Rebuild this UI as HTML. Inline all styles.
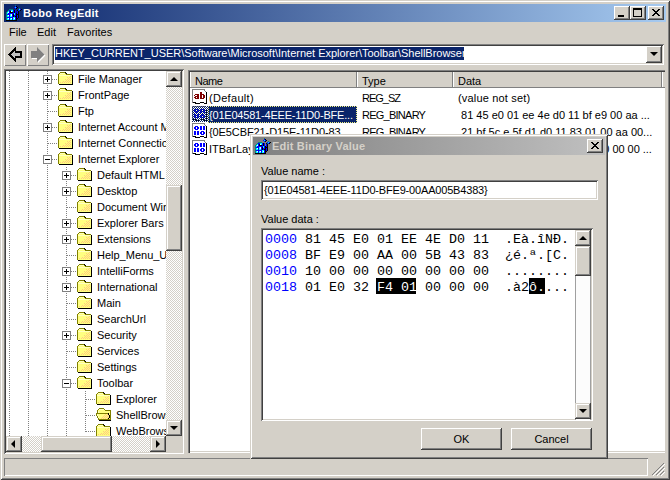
<!DOCTYPE html><html><head><meta charset="utf-8"><style>
*{margin:0;padding:0;box-sizing:border-box}
html,body{width:670px;height:480px;overflow:hidden;background:#d4d0c8;font-family:"Liberation Sans",sans-serif;font-size:11px;color:#000}
.a{position:absolute}
.sbtn{background:#d4d0c8;box-shadow:inset -1px -1px #404040,inset 1px 1px #d4d0c8,inset -2px -2px #808080,inset 2px 2px #fff}
.raised{background:#d4d0c8;box-shadow:inset -1px -1px #404040,inset 1px 1px #fff,inset -2px -2px #808080,inset 2px 2px #d4d0c8}
.sunken{box-shadow:inset 1px 1px #808080,inset -1px -1px #fff,inset 2px 2px #404040,inset -2px -2px #d4d0c8}
.t{position:absolute;white-space:pre;line-height:16px}
.dv{position:absolute;width:1px;background:repeating-linear-gradient(to bottom,#808080 0 1px,transparent 1px 2px)}
.dh{position:absolute;height:1px;background:repeating-linear-gradient(to right,#808080 0 1px,transparent 1px 2px)}
.pb{position:absolute;width:9px;height:9px;border:1px solid #808080;background:#fff}
.pb:before{content:"";position:absolute;left:1px;top:3px;width:5px;height:1px;background:#000}
.pb.p:after{content:"";position:absolute;left:3px;top:1px;width:1px;height:5px;background:#000}
.fold{position:absolute;width:16px;height:16px}
</style></head><body>
<svg width="0" height="0" style="position:absolute"><defs><symbol id="i0" viewBox="0 0 16 16" shape-rendering="crispEdges"><rect x="9" y="0" width="1" height="1" fill="#008080"/><rect x="9" y="1" width="1" height="1" fill="#0000ff"/><rect x="10" y="1" width="1" height="1" fill="#000000"/><rect x="8" y="2" width="1" height="1" fill="#0000ff"/><rect x="9" y="2" width="1" height="1" fill="#00ffff"/><rect x="10" y="2" width="1" height="1" fill="#0000ff"/><rect x="11" y="2" width="1" height="1" fill="#000000"/><rect x="9" y="3" width="1" height="1" fill="#0000ff"/><rect x="10" y="3" width="1" height="1" fill="#000000"/><rect x="13" y="3" width="1" height="1" fill="#008080"/><rect x="3" y="4" width="4" height="1" fill="#008080"/><rect x="12" y="4" width="1" height="1" fill="#0000ff"/><rect x="13" y="4" width="1" height="1" fill="#00ffff"/><rect x="14" y="4" width="1" height="1" fill="#0000ff"/><rect x="15" y="4" width="1" height="1" fill="#000000"/><rect x="2" y="5" width="1" height="1" fill="#008080"/><rect x="3" y="5" width="2" height="1" fill="#0000ff"/><rect x="5" y="5" width="2" height="1" fill="#00ffff"/><rect x="7" y="5" width="1" height="1" fill="#0000ff"/><rect x="8" y="5" width="1" height="1" fill="#000000"/><rect x="9" y="5" width="1" height="1" fill="#0000ff"/><rect x="11" y="5" width="1" height="1" fill="#000000"/><rect x="12" y="5" width="1" height="1" fill="#008080"/><rect x="13" y="5" width="1" height="1" fill="#0000ff"/><rect x="14" y="5" width="1" height="1" fill="#000000"/><rect x="1" y="6" width="1" height="1" fill="#008080"/><rect x="2" y="6" width="1" height="1" fill="#00ffff"/><rect x="3" y="6" width="1" height="1" fill="#0000ff"/><rect x="4" y="6" width="1" height="1" fill="#000000"/><rect x="5" y="6" width="1" height="1" fill="#ffffff"/><rect x="6" y="6" width="1" height="1" fill="#00ffff"/><rect x="7" y="6" width="1" height="1" fill="#0000ff"/><rect x="8" y="6" width="1" height="1" fill="#000000"/><rect x="9" y="6" width="1" height="1" fill="#0000ff"/><rect x="11" y="6" width="1" height="1" fill="#0000ff"/><rect x="12" y="6" width="1" height="1" fill="#000000"/><rect x="0" y="7" width="1" height="1" fill="#008080"/><rect x="1" y="7" width="1" height="1" fill="#00ffff"/><rect x="2" y="7" width="1" height="1" fill="#ffffff"/><rect x="3" y="7" width="1" height="1" fill="#0000ff"/><rect x="4" y="7" width="3" height="1" fill="#000000"/><rect x="7" y="7" width="1" height="1" fill="#0000ff"/><rect x="8" y="7" width="1" height="1" fill="#000000"/><rect x="9" y="7" width="1" height="1" fill="#0000ff"/><rect x="11" y="7" width="1" height="1" fill="#0000ff"/><rect x="12" y="7" width="1" height="1" fill="#000000"/><rect x="0" y="8" width="1" height="1" fill="#008080"/><rect x="1" y="8" width="1" height="1" fill="#00ffff"/><rect x="2" y="8" width="6" height="1" fill="#0000ff"/><rect x="8" y="8" width="1" height="1" fill="#00ffff"/><rect x="9" y="8" width="1" height="1" fill="#0000ff"/><rect x="10" y="8" width="1" height="1" fill="#000000"/><rect x="11" y="8" width="1" height="1" fill="#0000ff"/><rect x="12" y="8" width="1" height="1" fill="#000000"/><rect x="0" y="9" width="1" height="1" fill="#008080"/><rect x="1" y="9" width="3" height="1" fill="#0000ff"/><rect x="4" y="9" width="1" height="1" fill="#00ffff"/><rect x="5" y="9" width="1" height="1" fill="#ffffff"/><rect x="6" y="9" width="1" height="1" fill="#0000ff"/><rect x="7" y="9" width="1" height="1" fill="#000000"/><rect x="8" y="9" width="1" height="1" fill="#00ffff"/><rect x="9" y="9" width="1" height="1" fill="#0000ff"/><rect x="10" y="9" width="3" height="1" fill="#000000"/><rect x="0" y="10" width="1" height="1" fill="#008080"/><rect x="1" y="10" width="1" height="1" fill="#00ffff"/><rect x="2" y="10" width="1" height="1" fill="#ffffff"/><rect x="3" y="10" width="1" height="1" fill="#0000ff"/><rect x="4" y="10" width="1" height="1" fill="#00ffff"/><rect x="5" y="10" width="1" height="1" fill="#ffffff"/><rect x="6" y="10" width="1" height="1" fill="#0000ff"/><rect x="7" y="10" width="1" height="1" fill="#000000"/><rect x="8" y="10" width="2" height="1" fill="#0000ff"/><rect x="10" y="10" width="1" height="1" fill="#000000"/><rect x="11" y="10" width="1" height="1" fill="#0000ff"/><rect x="12" y="10" width="1" height="1" fill="#000000"/><rect x="0" y="11" width="1" height="1" fill="#008080"/><rect x="1" y="11" width="2" height="1" fill="#00ffff"/><rect x="3" y="11" width="1" height="1" fill="#0000ff"/><rect x="4" y="11" width="2" height="1" fill="#00ffff"/><rect x="6" y="11" width="1" height="1" fill="#0000ff"/><rect x="7" y="11" width="1" height="1" fill="#000000"/><rect x="8" y="11" width="1" height="1" fill="#0000ff"/><rect x="9" y="11" width="2" height="1" fill="#000000"/><rect x="11" y="11" width="1" height="1" fill="#0000ff"/><rect x="12" y="11" width="1" height="1" fill="#000000"/><rect x="0" y="12" width="1" height="1" fill="#008080"/><rect x="1" y="12" width="6" height="1" fill="#0000ff"/><rect x="7" y="12" width="2" height="1" fill="#00ffff"/><rect x="9" y="12" width="1" height="1" fill="#0000ff"/><rect x="10" y="12" width="1" height="1" fill="#000000"/><rect x="11" y="12" width="1" height="1" fill="#0000ff"/><rect x="12" y="12" width="1" height="1" fill="#000000"/><rect x="0" y="13" width="1" height="1" fill="#008080"/><rect x="1" y="13" width="1" height="1" fill="#00ffff"/><rect x="2" y="13" width="1" height="1" fill="#ffffff"/><rect x="3" y="13" width="1" height="1" fill="#0000ff"/><rect x="4" y="13" width="1" height="1" fill="#00ffff"/><rect x="5" y="13" width="1" height="1" fill="#ffffff"/><rect x="6" y="13" width="1" height="1" fill="#0000ff"/><rect x="7" y="13" width="1" height="1" fill="#00ffff"/><rect x="8" y="13" width="1" height="1" fill="#ffffff"/><rect x="9" y="13" width="1" height="1" fill="#0000ff"/><rect x="10" y="13" width="2" height="1" fill="#000000"/><rect x="0" y="14" width="1" height="1" fill="#008080"/><rect x="1" y="14" width="2" height="1" fill="#00ffff"/><rect x="3" y="14" width="1" height="1" fill="#0000ff"/><rect x="4" y="14" width="2" height="1" fill="#00ffff"/><rect x="6" y="14" width="1" height="1" fill="#0000ff"/><rect x="7" y="14" width="2" height="1" fill="#00ffff"/><rect x="9" y="14" width="1" height="1" fill="#0000ff"/><rect x="10" y="14" width="1" height="1" fill="#000000"/><rect x="0" y="15" width="11" height="1" fill="#000000"/></symbol><symbol id="i1" viewBox="0 0 16 16" shape-rendering="crispEdges"><rect x="3" y="1" width="5" height="1" fill="#808000"/><rect x="8" y="1" width="1" height="1" fill="#000000"/><rect x="2" y="2" width="1" height="1" fill="#808000"/><rect x="3" y="2" width="5" height="1" fill="#ffffc0"/><rect x="8" y="2" width="1" height="1" fill="#808000"/><rect x="9" y="2" width="1" height="1" fill="#000000"/><rect x="1" y="3" width="1" height="1" fill="#808000"/><rect x="2" y="3" width="7" height="1" fill="#ffff80"/><rect x="9" y="3" width="6" height="1" fill="#808000"/><rect x="1" y="4" width="1" height="1" fill="#808000"/><rect x="2" y="4" width="13" height="1" fill="#ffffc0"/><rect x="15" y="4" width="1" height="1" fill="#000000"/><rect x="1" y="5" width="1" height="1" fill="#808000"/><rect x="2" y="5" width="11" height="1" fill="#ffff80"/><rect x="13" y="5" width="1" height="1" fill="#ffcc80"/><rect x="14" y="5" width="1" height="1" fill="#ffff80"/><rect x="15" y="5" width="1" height="1" fill="#000000"/><rect x="1" y="6" width="1" height="1" fill="#808000"/><rect x="2" y="6" width="8" height="1" fill="#ffff80"/><rect x="10" y="6" width="1" height="1" fill="#ffcc80"/><rect x="11" y="6" width="1" height="1" fill="#ffff80"/><rect x="12" y="6" width="1" height="1" fill="#ffcc80"/><rect x="13" y="6" width="2" height="1" fill="#ffff80"/><rect x="15" y="6" width="1" height="1" fill="#000000"/><rect x="1" y="7" width="1" height="1" fill="#808000"/><rect x="2" y="7" width="9" height="1" fill="#ffff80"/><rect x="11" y="7" width="1" height="1" fill="#ffcc80"/><rect x="12" y="7" width="1" height="1" fill="#ffff80"/><rect x="13" y="7" width="1" height="1" fill="#ffcc80"/><rect x="14" y="7" width="1" height="1" fill="#ffff80"/><rect x="15" y="7" width="1" height="1" fill="#000000"/><rect x="1" y="8" width="1" height="1" fill="#808000"/><rect x="2" y="8" width="6" height="1" fill="#ffff80"/><rect x="8" y="8" width="1" height="1" fill="#ffcc80"/><rect x="9" y="8" width="1" height="1" fill="#ffff80"/><rect x="10" y="8" width="1" height="1" fill="#ffcc80"/><rect x="11" y="8" width="1" height="1" fill="#ffff80"/><rect x="12" y="8" width="1" height="1" fill="#ffcc80"/><rect x="13" y="8" width="2" height="1" fill="#ffff80"/><rect x="15" y="8" width="1" height="1" fill="#000000"/><rect x="1" y="9" width="1" height="1" fill="#808000"/><rect x="2" y="9" width="7" height="1" fill="#ffff80"/><rect x="9" y="9" width="1" height="1" fill="#ffcc80"/><rect x="10" y="9" width="1" height="1" fill="#ffff80"/><rect x="11" y="9" width="1" height="1" fill="#ffcc80"/><rect x="12" y="9" width="1" height="1" fill="#ffff80"/><rect x="13" y="9" width="1" height="1" fill="#ffcc80"/><rect x="14" y="9" width="1" height="1" fill="#ffff80"/><rect x="15" y="9" width="1" height="1" fill="#000000"/><rect x="1" y="10" width="1" height="1" fill="#808000"/><rect x="2" y="10" width="4" height="1" fill="#ffff80"/><rect x="6" y="10" width="1" height="1" fill="#ffcc80"/><rect x="7" y="10" width="1" height="1" fill="#ffff80"/><rect x="8" y="10" width="1" height="1" fill="#ffcc80"/><rect x="9" y="10" width="1" height="1" fill="#ffff80"/><rect x="10" y="10" width="1" height="1" fill="#ffcc80"/><rect x="11" y="10" width="1" height="1" fill="#ffff80"/><rect x="12" y="10" width="1" height="1" fill="#ffcc80"/><rect x="13" y="10" width="2" height="1" fill="#ffff80"/><rect x="15" y="10" width="1" height="1" fill="#000000"/><rect x="1" y="11" width="1" height="1" fill="#808000"/><rect x="2" y="11" width="1" height="1" fill="#ffff80"/><rect x="3" y="11" width="1" height="1" fill="#ffcc80"/><rect x="4" y="11" width="1" height="1" fill="#ffff80"/><rect x="5" y="11" width="1" height="1" fill="#ffcc80"/><rect x="6" y="11" width="1" height="1" fill="#ffff80"/><rect x="7" y="11" width="1" height="1" fill="#ffcc80"/><rect x="8" y="11" width="1" height="1" fill="#ffff80"/><rect x="9" y="11" width="1" height="1" fill="#ffcc80"/><rect x="10" y="11" width="1" height="1" fill="#ffff80"/><rect x="11" y="11" width="1" height="1" fill="#ffcc80"/><rect x="12" y="11" width="1" height="1" fill="#ffff80"/><rect x="13" y="11" width="1" height="1" fill="#ffcc80"/><rect x="14" y="11" width="1" height="1" fill="#ffff80"/><rect x="15" y="11" width="1" height="1" fill="#000000"/><rect x="1" y="12" width="1" height="1" fill="#808000"/><rect x="2" y="12" width="13" height="1" fill="#ffff80"/><rect x="15" y="12" width="1" height="1" fill="#000000"/><rect x="2" y="13" width="14" height="1" fill="#000000"/></symbol><symbol id="i2" viewBox="0 0 16 16" shape-rendering="crispEdges"><rect x="4" y="1" width="5" height="1" fill="#808000"/><rect x="3" y="2" width="1" height="1" fill="#808000"/><rect x="4" y="2" width="5" height="1" fill="#ffffc0"/><rect x="9" y="2" width="1" height="1" fill="#808000"/><rect x="2" y="3" width="1" height="1" fill="#808000"/><rect x="3" y="3" width="7" height="1" fill="#ffff80"/><rect x="10" y="3" width="6" height="1" fill="#808000"/><rect x="2" y="4" width="1" height="1" fill="#808000"/><rect x="3" y="4" width="1" height="1" fill="#ffffc0"/><rect x="4" y="4" width="11" height="1" fill="#ffff80"/><rect x="15" y="4" width="1" height="1" fill="#808000"/><rect x="2" y="5" width="1" height="1" fill="#808000"/><rect x="3" y="5" width="1" height="1" fill="#ffffc0"/><rect x="4" y="5" width="11" height="1" fill="#ffff80"/><rect x="15" y="5" width="1" height="1" fill="#808000"/><rect x="1" y="6" width="12" height="1" fill="#808000"/><rect x="13" y="6" width="1" height="1" fill="#000000"/><rect x="14" y="6" width="1" height="1" fill="#ffff80"/><rect x="15" y="6" width="1" height="1" fill="#808000"/><rect x="1" y="7" width="1" height="1" fill="#808000"/><rect x="2" y="7" width="1" height="1" fill="#ffffc0"/><rect x="3" y="7" width="7" height="1" fill="#ffff80"/><rect x="10" y="7" width="1" height="1" fill="#ffcc80"/><rect x="11" y="7" width="1" height="1" fill="#ffff80"/><rect x="12" y="7" width="1" height="1" fill="#ffcc80"/><rect x="13" y="7" width="1" height="1" fill="#000000"/><rect x="14" y="7" width="1" height="1" fill="#ffff80"/><rect x="15" y="7" width="1" height="1" fill="#808000"/><rect x="1" y="8" width="1" height="1" fill="#808000"/><rect x="2" y="8" width="1" height="1" fill="#ffffc0"/><rect x="3" y="8" width="6" height="1" fill="#ffff80"/><rect x="9" y="8" width="1" height="1" fill="#ffcc80"/><rect x="10" y="8" width="1" height="1" fill="#ffff80"/><rect x="11" y="8" width="1" height="1" fill="#ffcc80"/><rect x="12" y="8" width="1" height="1" fill="#ffff80"/><rect x="13" y="8" width="1" height="1" fill="#ffcc80"/><rect x="14" y="8" width="1" height="1" fill="#000000"/><rect x="15" y="8" width="1" height="1" fill="#808000"/><rect x="2" y="9" width="1" height="1" fill="#808000"/><rect x="3" y="9" width="1" height="1" fill="#ffffc0"/><rect x="4" y="9" width="4" height="1" fill="#ffff80"/><rect x="8" y="9" width="1" height="1" fill="#ffcc80"/><rect x="9" y="9" width="1" height="1" fill="#ffff80"/><rect x="10" y="9" width="1" height="1" fill="#ffcc80"/><rect x="11" y="9" width="1" height="1" fill="#ffff80"/><rect x="12" y="9" width="1" height="1" fill="#ffcc80"/><rect x="13" y="9" width="1" height="1" fill="#ffff80"/><rect x="14" y="9" width="1" height="1" fill="#000000"/><rect x="15" y="9" width="1" height="1" fill="#808000"/><rect x="2" y="10" width="1" height="1" fill="#808000"/><rect x="3" y="10" width="1" height="1" fill="#ffffc0"/><rect x="4" y="10" width="3" height="1" fill="#ffff80"/><rect x="7" y="10" width="1" height="1" fill="#ffcc80"/><rect x="8" y="10" width="1" height="1" fill="#ffff80"/><rect x="9" y="10" width="1" height="1" fill="#ffcc80"/><rect x="10" y="10" width="1" height="1" fill="#ffff80"/><rect x="11" y="10" width="1" height="1" fill="#ffcc80"/><rect x="12" y="10" width="1" height="1" fill="#ffff80"/><rect x="13" y="10" width="1" height="1" fill="#ffcc80"/><rect x="14" y="10" width="1" height="1" fill="#000000"/><rect x="15" y="10" width="1" height="1" fill="#808000"/><rect x="3" y="11" width="1" height="1" fill="#808000"/><rect x="4" y="11" width="2" height="1" fill="#ffff80"/><rect x="6" y="11" width="1" height="1" fill="#ffcc80"/><rect x="7" y="11" width="1" height="1" fill="#ffff80"/><rect x="8" y="11" width="1" height="1" fill="#ffcc80"/><rect x="9" y="11" width="1" height="1" fill="#ffff80"/><rect x="10" y="11" width="1" height="1" fill="#ffcc80"/><rect x="11" y="11" width="1" height="1" fill="#ffff80"/><rect x="12" y="11" width="1" height="1" fill="#ffcc80"/><rect x="13" y="11" width="1" height="1" fill="#000000"/><rect x="14" y="11" width="1" height="1" fill="#ffff80"/><rect x="15" y="11" width="1" height="1" fill="#808000"/><rect x="3" y="12" width="13" height="1" fill="#808000"/><rect x="4" y="13" width="12" height="1" fill="#000000"/></symbol><symbol id="i3" viewBox="0 0 16 16" shape-rendering="crispEdges"><rect x="0" y="0" width="13" height="1" fill="#808080"/><rect x="0" y="1" width="1" height="1" fill="#808080"/><rect x="1" y="1" width="11" height="1" fill="#ffffff"/><rect x="12" y="1" width="1" height="1" fill="#808080"/><rect x="13" y="1" width="1" height="1" fill="#ffffff"/><rect x="0" y="2" width="1" height="1" fill="#808080"/><rect x="1" y="2" width="12" height="1" fill="#ffffff"/><rect x="13" y="2" width="1" height="1" fill="#808080"/><rect x="14" y="2" width="1" height="1" fill="#ffffff"/><rect x="0" y="3" width="1" height="1" fill="#808080"/><rect x="1" y="3" width="7" height="1" fill="#ffffff"/><rect x="8" y="3" width="2" height="1" fill="#800000"/><rect x="10" y="3" width="4" height="1" fill="#ffffff"/><rect x="14" y="3" width="1" height="1" fill="#000000"/><rect x="0" y="4" width="1" height="1" fill="#808080"/><rect x="1" y="4" width="7" height="1" fill="#ffffff"/><rect x="8" y="4" width="2" height="1" fill="#800000"/><rect x="10" y="4" width="4" height="1" fill="#ffffff"/><rect x="14" y="4" width="1" height="1" fill="#000000"/><rect x="0" y="5" width="1" height="1" fill="#808080"/><rect x="1" y="5" width="2" height="1" fill="#ffffff"/><rect x="3" y="5" width="4" height="1" fill="#800000"/><rect x="7" y="5" width="1" height="1" fill="#ffffff"/><rect x="8" y="5" width="4" height="1" fill="#800000"/><rect x="12" y="5" width="2" height="1" fill="#ffffff"/><rect x="14" y="5" width="1" height="1" fill="#000000"/><rect x="0" y="6" width="1" height="1" fill="#808080"/><rect x="1" y="6" width="1" height="1" fill="#ffffff"/><rect x="2" y="6" width="1" height="1" fill="#800000"/><rect x="3" y="6" width="2" height="1" fill="#ffffff"/><rect x="5" y="6" width="2" height="1" fill="#800000"/><rect x="7" y="6" width="1" height="1" fill="#ffffff"/><rect x="8" y="6" width="2" height="1" fill="#800000"/><rect x="10" y="6" width="1" height="1" fill="#ffffff"/><rect x="11" y="6" width="2" height="1" fill="#800000"/><rect x="13" y="6" width="1" height="1" fill="#ffffff"/><rect x="14" y="6" width="1" height="1" fill="#000000"/><rect x="0" y="7" width="1" height="1" fill="#808080"/><rect x="1" y="7" width="2" height="1" fill="#ffffff"/><rect x="3" y="7" width="4" height="1" fill="#800000"/><rect x="7" y="7" width="1" height="1" fill="#ffffff"/><rect x="8" y="7" width="2" height="1" fill="#800000"/><rect x="10" y="7" width="1" height="1" fill="#ffffff"/><rect x="11" y="7" width="2" height="1" fill="#800000"/><rect x="13" y="7" width="1" height="1" fill="#ffffff"/><rect x="14" y="7" width="1" height="1" fill="#000000"/><rect x="0" y="8" width="1" height="1" fill="#808080"/><rect x="1" y="8" width="1" height="1" fill="#ffffff"/><rect x="2" y="8" width="2" height="1" fill="#800000"/><rect x="4" y="8" width="1" height="1" fill="#ffffff"/><rect x="5" y="8" width="2" height="1" fill="#800000"/><rect x="7" y="8" width="1" height="1" fill="#ffffff"/><rect x="8" y="8" width="2" height="1" fill="#800000"/><rect x="10" y="8" width="1" height="1" fill="#ffffff"/><rect x="11" y="8" width="2" height="1" fill="#800000"/><rect x="13" y="8" width="1" height="1" fill="#ffffff"/><rect x="14" y="8" width="1" height="1" fill="#000000"/><rect x="0" y="9" width="1" height="1" fill="#808080"/><rect x="1" y="9" width="2" height="1" fill="#ffffff"/><rect x="3" y="9" width="4" height="1" fill="#800000"/><rect x="7" y="9" width="1" height="1" fill="#ffffff"/><rect x="8" y="9" width="4" height="1" fill="#800000"/><rect x="12" y="9" width="2" height="1" fill="#ffffff"/><rect x="14" y="9" width="1" height="1" fill="#000000"/><rect x="0" y="10" width="1" height="1" fill="#808080"/><rect x="1" y="10" width="13" height="1" fill="#ffffff"/><rect x="14" y="10" width="1" height="1" fill="#000000"/><rect x="0" y="11" width="1" height="1" fill="#808080"/><rect x="1" y="11" width="13" height="1" fill="#ffffff"/><rect x="14" y="11" width="1" height="1" fill="#000000"/><rect x="0" y="12" width="1" height="1" fill="#808080"/><rect x="1" y="12" width="13" height="1" fill="#ffffff"/><rect x="14" y="12" width="1" height="1" fill="#000000"/><rect x="0" y="13" width="1" height="1" fill="#808080"/><rect x="1" y="13" width="3" height="1" fill="#000000"/><rect x="4" y="13" width="4" height="1" fill="#ffffff"/><rect x="8" y="13" width="4" height="1" fill="#000000"/><rect x="12" y="13" width="2" height="1" fill="#ffffff"/><rect x="14" y="13" width="1" height="1" fill="#000000"/><rect x="3" y="14" width="5" height="1" fill="#000000"/><rect x="12" y="14" width="3" height="1" fill="#000000"/></symbol><symbol id="i4" viewBox="0 0 16 16" shape-rendering="crispEdges"><rect x="0" y="0" width="13" height="1" fill="#808080"/><rect x="0" y="1" width="1" height="1" fill="#808080"/><rect x="1" y="1" width="11" height="1" fill="#ffffff"/><rect x="12" y="1" width="1" height="1" fill="#808080"/><rect x="13" y="1" width="1" height="1" fill="#ffffff"/><rect x="0" y="2" width="1" height="1" fill="#808080"/><rect x="1" y="2" width="12" height="1" fill="#ffffff"/><rect x="13" y="2" width="1" height="1" fill="#808080"/><rect x="14" y="2" width="1" height="1" fill="#ffffff"/><rect x="0" y="3" width="1" height="1" fill="#808080"/><rect x="1" y="3" width="2" height="1" fill="#ffffff"/><rect x="3" y="3" width="3" height="1" fill="#0000ff"/><rect x="6" y="3" width="2" height="1" fill="#ffffff"/><rect x="8" y="3" width="2" height="1" fill="#0000ff"/><rect x="10" y="3" width="1" height="1" fill="#ffffff"/><rect x="11" y="3" width="2" height="1" fill="#0000ff"/><rect x="13" y="3" width="1" height="1" fill="#ffffff"/><rect x="14" y="3" width="1" height="1" fill="#000000"/><rect x="0" y="4" width="1" height="1" fill="#808080"/><rect x="1" y="4" width="1" height="1" fill="#ffffff"/><rect x="2" y="4" width="2" height="1" fill="#0000ff"/><rect x="4" y="4" width="1" height="1" fill="#ffffff"/><rect x="5" y="4" width="2" height="1" fill="#0000ff"/><rect x="7" y="4" width="1" height="1" fill="#ffffff"/><rect x="8" y="4" width="2" height="1" fill="#0000ff"/><rect x="10" y="4" width="1" height="1" fill="#ffffff"/><rect x="11" y="4" width="2" height="1" fill="#0000ff"/><rect x="13" y="4" width="1" height="1" fill="#ffffff"/><rect x="14" y="4" width="1" height="1" fill="#000000"/><rect x="0" y="5" width="1" height="1" fill="#808080"/><rect x="1" y="5" width="1" height="1" fill="#ffffff"/><rect x="2" y="5" width="2" height="1" fill="#0000ff"/><rect x="4" y="5" width="1" height="1" fill="#ffffff"/><rect x="5" y="5" width="2" height="1" fill="#0000ff"/><rect x="7" y="5" width="1" height="1" fill="#ffffff"/><rect x="8" y="5" width="2" height="1" fill="#0000ff"/><rect x="10" y="5" width="1" height="1" fill="#ffffff"/><rect x="11" y="5" width="2" height="1" fill="#0000ff"/><rect x="13" y="5" width="1" height="1" fill="#ffffff"/><rect x="14" y="5" width="1" height="1" fill="#000000"/><rect x="0" y="6" width="1" height="1" fill="#808080"/><rect x="1" y="6" width="2" height="1" fill="#ffffff"/><rect x="3" y="6" width="3" height="1" fill="#0000ff"/><rect x="6" y="6" width="2" height="1" fill="#ffffff"/><rect x="8" y="6" width="2" height="1" fill="#0000ff"/><rect x="10" y="6" width="1" height="1" fill="#ffffff"/><rect x="11" y="6" width="2" height="1" fill="#0000ff"/><rect x="13" y="6" width="1" height="1" fill="#ffffff"/><rect x="14" y="6" width="1" height="1" fill="#000000"/><rect x="0" y="7" width="1" height="1" fill="#808080"/><rect x="1" y="7" width="13" height="1" fill="#ffffff"/><rect x="14" y="7" width="1" height="1" fill="#000000"/><rect x="0" y="8" width="1" height="1" fill="#808080"/><rect x="1" y="8" width="1" height="1" fill="#ffffff"/><rect x="2" y="8" width="2" height="1" fill="#0000ff"/><rect x="4" y="8" width="1" height="1" fill="#ffffff"/><rect x="5" y="8" width="2" height="1" fill="#0000ff"/><rect x="7" y="8" width="2" height="1" fill="#ffffff"/><rect x="9" y="8" width="3" height="1" fill="#0000ff"/><rect x="12" y="8" width="2" height="1" fill="#ffffff"/><rect x="14" y="8" width="1" height="1" fill="#000000"/><rect x="0" y="9" width="1" height="1" fill="#808080"/><rect x="1" y="9" width="1" height="1" fill="#ffffff"/><rect x="2" y="9" width="2" height="1" fill="#0000ff"/><rect x="4" y="9" width="1" height="1" fill="#ffffff"/><rect x="5" y="9" width="2" height="1" fill="#0000ff"/><rect x="7" y="9" width="1" height="1" fill="#ffffff"/><rect x="8" y="9" width="2" height="1" fill="#0000ff"/><rect x="10" y="9" width="1" height="1" fill="#ffffff"/><rect x="11" y="9" width="2" height="1" fill="#0000ff"/><rect x="13" y="9" width="1" height="1" fill="#ffffff"/><rect x="14" y="9" width="1" height="1" fill="#000000"/><rect x="0" y="10" width="1" height="1" fill="#808080"/><rect x="1" y="10" width="1" height="1" fill="#ffffff"/><rect x="2" y="10" width="2" height="1" fill="#0000ff"/><rect x="4" y="10" width="1" height="1" fill="#ffffff"/><rect x="5" y="10" width="2" height="1" fill="#0000ff"/><rect x="7" y="10" width="1" height="1" fill="#ffffff"/><rect x="8" y="10" width="2" height="1" fill="#0000ff"/><rect x="10" y="10" width="1" height="1" fill="#ffffff"/><rect x="11" y="10" width="2" height="1" fill="#0000ff"/><rect x="13" y="10" width="1" height="1" fill="#ffffff"/><rect x="14" y="10" width="1" height="1" fill="#000000"/><rect x="0" y="11" width="1" height="1" fill="#808080"/><rect x="1" y="11" width="1" height="1" fill="#ffffff"/><rect x="2" y="11" width="2" height="1" fill="#0000ff"/><rect x="4" y="11" width="1" height="1" fill="#ffffff"/><rect x="5" y="11" width="2" height="1" fill="#0000ff"/><rect x="7" y="11" width="2" height="1" fill="#ffffff"/><rect x="9" y="11" width="3" height="1" fill="#0000ff"/><rect x="12" y="11" width="2" height="1" fill="#ffffff"/><rect x="14" y="11" width="1" height="1" fill="#000000"/><rect x="0" y="12" width="1" height="1" fill="#808080"/><rect x="1" y="12" width="13" height="1" fill="#ffffff"/><rect x="14" y="12" width="1" height="1" fill="#000000"/><rect x="0" y="13" width="1" height="1" fill="#808080"/><rect x="1" y="13" width="3" height="1" fill="#000000"/><rect x="4" y="13" width="4" height="1" fill="#ffffff"/><rect x="8" y="13" width="4" height="1" fill="#000000"/><rect x="12" y="13" width="2" height="1" fill="#ffffff"/><rect x="14" y="13" width="1" height="1" fill="#000000"/><rect x="3" y="14" width="5" height="1" fill="#000000"/><rect x="12" y="14" width="3" height="1" fill="#000000"/></symbol></defs></svg>
<div class="a" style="left:0;top:0;width:670px;height:480px;box-shadow:inset 1px 1px #d4d0c8,inset -1px -1px #404040,inset 2px 2px #fff,inset -2px -2px #808080"></div>
<div class="a" style="left:4px;top:4px;width:662px;height:18px;background:linear-gradient(to right,#0a246a,#a6caf0)"></div>
<svg class="a" style="left:6px;top:5px" width="16" height="16" shape-rendering="crispEdges"><use href="#i0"/></svg>
<div class="t" style="left:23px;top:5px;color:#fff;font-weight:bold;letter-spacing:.25px">Bobo RegEdit</div>
<div class="a raised" style="left:614px;top:6px;width:16px;height:14px"><div class="a" style="left:4px;top:9px;width:6px;height:2px;background:#000"></div></div>
<div class="a raised" style="left:630px;top:6px;width:16px;height:14px"><div class="a" style="left:3px;top:2px;width:9px;height:9px;border:1px solid #000;border-top-width:2px"></div></div>
<div class="a raised" style="left:648px;top:6px;width:16px;height:14px"><svg class="a" style="left:4px;top:3px" width="8" height="7" shape-rendering="crispEdges"><path d="M0 0h2v1h1v1h2v-1h1v-1h2v1h-1v1h-1v1h-1v1h1v1h1v1h1v1h-2v-1h-1v-1h-2v1h-1v1h-2v-1h1v-1h1v-1h1v-1h-1v-1h-1v-1h-1z" fill="#000"/></svg></div>
<div class="t" style="left:9px;top:24px">File</div>
<div class="t" style="left:37px;top:24px">Edit</div>
<div class="t" style="left:67px;top:24px">Favorites</div>
<div class="a" style="left:4px;top:44px;width:22px;height:22px;box-shadow:inset 1px 1px #fff,inset -1px -1px #808080"></div>
<svg class="a" style="left:4px;top:44px" width="22" height="22" shape-rendering="crispEdges"><path d="M5.5 10.5L11.5 4.5V8H17V13H11.5V16.5Z" fill="#c0c0c0" stroke="#000" stroke-width="1.5" stroke-linejoin="miter"/></svg>
<div class="a" style="left:27px;top:44px;width:22px;height:22px;box-shadow:inset 1px 1px #fff,inset -1px -1px #808080"></div>
<svg class="a" style="left:27px;top:44px" width="22" height="22"><path d="M4 7H10V3L17.5 10.5L10 18V14H4Z" fill="#fff" transform="translate(1,1)"/><path d="M4 7H10V3L17.5 10.5L10 18V14H4Z" fill="#808080"/></svg>
<div class="a sunken" style="left:52px;top:44px;width:612px;height:21px;background:#fff"></div>
<div class="a" style="left:55px;top:47px;width:409px;height:13px;background:#0a246a"></div>
<div class="t" style="left:55px;top:45px;color:#fff;line-height:16px;letter-spacing:-.02px">HKEY_CURRENT_USER\Software\Microsoft\Internet Explorer\Toolbar\ShellBrowser</div>
<div class="a raised" style="left:646px;top:46px;width:16px;height:17px"><div class="a" style="left:4px;top:6px;width:0;height:0;border-left:4px solid transparent;border-right:4px solid transparent;border-top:4px solid #000"></div></div>
<div class="a sunken" style="left:4px;top:69px;width:180px;height:385px;background:#fff"></div>
<div class="a" style="left:6px;top:71px;width:160px;height:365px;overflow:hidden">
<div class="dv" style="left:3px;top:0px;height:365px"></div>
<div class="dv" style="left:22px;top:0px;height:365px"></div>
<div class="dv" style="left:41px;top:0px;height:365px"></div>
<div class="dv" style="left:60px;top:96px;height:269px"></div>
<div class="dv" style="left:79px;top:320px;height:41px"></div>
<div class="pb p" style="left:37px;top:4px"></div>
<div class="dh" style="left:46px;top:8px;width:6px"></div>
<svg class="a" style="left:51px;top:0px" width="16" height="16" shape-rendering="crispEdges"><use href="#i1"/></svg>
<div class="t" style="left:72px;top:0px">File Manager</div>
<div class="pb p" style="left:37px;top:20px"></div>
<div class="dh" style="left:46px;top:24px;width:6px"></div>
<svg class="a" style="left:51px;top:16px" width="16" height="16" shape-rendering="crispEdges"><use href="#i1"/></svg>
<div class="t" style="left:72px;top:16px">FrontPage</div>
<div class="dh" style="left:42px;top:40px;width:10px"></div>
<svg class="a" style="left:51px;top:32px" width="16" height="16" shape-rendering="crispEdges"><use href="#i1"/></svg>
<div class="t" style="left:72px;top:32px">Ftp</div>
<div class="pb p" style="left:37px;top:52px"></div>
<div class="dh" style="left:46px;top:56px;width:6px"></div>
<svg class="a" style="left:51px;top:48px" width="16" height="16" shape-rendering="crispEdges"><use href="#i1"/></svg>
<div class="t" style="left:72px;top:48px">Internet Account Manager</div>
<div class="dh" style="left:42px;top:72px;width:10px"></div>
<svg class="a" style="left:51px;top:64px" width="16" height="16" shape-rendering="crispEdges"><use href="#i1"/></svg>
<div class="t" style="left:72px;top:64px">Internet Connection Wizard</div>
<div class="pb " style="left:37px;top:84px"></div>
<div class="dh" style="left:46px;top:88px;width:6px"></div>
<svg class="a" style="left:51px;top:80px" width="16" height="16" shape-rendering="crispEdges"><use href="#i1"/></svg>
<div class="t" style="left:72px;top:80px">Internet Explorer</div>
<div class="pb p" style="left:56px;top:100px"></div>
<div class="dh" style="left:65px;top:104px;width:6px"></div>
<svg class="a" style="left:70px;top:96px" width="16" height="16" shape-rendering="crispEdges"><use href="#i1"/></svg>
<div class="t" style="left:91px;top:96px">Default HTML Editor</div>
<div class="pb p" style="left:56px;top:116px"></div>
<div class="dh" style="left:65px;top:120px;width:6px"></div>
<svg class="a" style="left:70px;top:112px" width="16" height="16" shape-rendering="crispEdges"><use href="#i1"/></svg>
<div class="t" style="left:91px;top:112px">Desktop</div>
<div class="dh" style="left:61px;top:136px;width:10px"></div>
<svg class="a" style="left:70px;top:128px" width="16" height="16" shape-rendering="crispEdges"><use href="#i1"/></svg>
<div class="t" style="left:91px;top:128px">Document Windows</div>
<div class="pb p" style="left:56px;top:148px"></div>
<div class="dh" style="left:65px;top:152px;width:6px"></div>
<svg class="a" style="left:70px;top:144px" width="16" height="16" shape-rendering="crispEdges"><use href="#i1"/></svg>
<div class="t" style="left:91px;top:144px">Explorer Bars</div>
<div class="pb p" style="left:56px;top:164px"></div>
<div class="dh" style="left:65px;top:168px;width:6px"></div>
<svg class="a" style="left:70px;top:160px" width="16" height="16" shape-rendering="crispEdges"><use href="#i1"/></svg>
<div class="t" style="left:91px;top:160px">Extensions</div>
<div class="dh" style="left:61px;top:184px;width:10px"></div>
<svg class="a" style="left:70px;top:176px" width="16" height="16" shape-rendering="crispEdges"><use href="#i1"/></svg>
<div class="t" style="left:91px;top:176px">Help_Menu_URLs</div>
<div class="pb p" style="left:56px;top:196px"></div>
<div class="dh" style="left:65px;top:200px;width:6px"></div>
<svg class="a" style="left:70px;top:192px" width="16" height="16" shape-rendering="crispEdges"><use href="#i1"/></svg>
<div class="t" style="left:91px;top:192px">IntelliForms</div>
<div class="pb p" style="left:56px;top:212px"></div>
<div class="dh" style="left:65px;top:216px;width:6px"></div>
<svg class="a" style="left:70px;top:208px" width="16" height="16" shape-rendering="crispEdges"><use href="#i1"/></svg>
<div class="t" style="left:91px;top:208px">International</div>
<div class="dh" style="left:61px;top:232px;width:10px"></div>
<svg class="a" style="left:70px;top:224px" width="16" height="16" shape-rendering="crispEdges"><use href="#i1"/></svg>
<div class="t" style="left:91px;top:224px">Main</div>
<div class="dh" style="left:61px;top:248px;width:10px"></div>
<svg class="a" style="left:70px;top:240px" width="16" height="16" shape-rendering="crispEdges"><use href="#i1"/></svg>
<div class="t" style="left:91px;top:240px">SearchUrl</div>
<div class="pb p" style="left:56px;top:260px"></div>
<div class="dh" style="left:65px;top:264px;width:6px"></div>
<svg class="a" style="left:70px;top:256px" width="16" height="16" shape-rendering="crispEdges"><use href="#i1"/></svg>
<div class="t" style="left:91px;top:256px">Security</div>
<div class="dh" style="left:61px;top:280px;width:10px"></div>
<svg class="a" style="left:70px;top:272px" width="16" height="16" shape-rendering="crispEdges"><use href="#i1"/></svg>
<div class="t" style="left:91px;top:272px">Services</div>
<div class="dh" style="left:61px;top:296px;width:10px"></div>
<svg class="a" style="left:70px;top:288px" width="16" height="16" shape-rendering="crispEdges"><use href="#i1"/></svg>
<div class="t" style="left:91px;top:288px">Settings</div>
<div class="pb " style="left:56px;top:308px"></div>
<div class="dh" style="left:65px;top:312px;width:6px"></div>
<svg class="a" style="left:70px;top:304px" width="16" height="16" shape-rendering="crispEdges"><use href="#i1"/></svg>
<div class="t" style="left:91px;top:304px">Toolbar</div>
<div class="dh" style="left:80px;top:328px;width:10px"></div>
<svg class="a" style="left:89px;top:320px" width="16" height="16" shape-rendering="crispEdges"><use href="#i1"/></svg>
<div class="t" style="left:110px;top:320px">Explorer</div>
<div class="dh" style="left:80px;top:344px;width:10px"></div>
<svg class="a" style="left:89px;top:336px" width="16" height="16" shape-rendering="crispEdges"><use href="#i2"/></svg>
<div class="t" style="left:110px;top:336px">ShellBrowser</div>
<div class="dh" style="left:80px;top:360px;width:10px"></div>
<svg class="a" style="left:89px;top:352px" width="16" height="16" shape-rendering="crispEdges"><use href="#i1"/></svg>
<div class="t" style="left:110px;top:352px">WebBrowser</div>
</div>
<div class="a" style="left:166px;top:71px;width:16px;height:365px;background-color:#fff;background-image:repeating-conic-gradient(#d4d0c8 0 25%,#fff 0 50%);background-size:2px 2px"></div>
<div class="a sbtn" style="left:166px;top:71px;width:16px;height:16px"><div class="a" style="left:4px;top:6px;border-left:4px solid transparent;border-right:4px solid transparent;border-bottom:4px solid #000"></div></div>
<div class="a sbtn" style="left:166px;top:185px;width:16px;height:66px"></div>
<div class="a sbtn" style="left:166px;top:420px;width:16px;height:16px"><div class="a" style="left:4px;top:6px;border-left:4px solid transparent;border-right:4px solid transparent;border-top:4px solid #000"></div></div>
<div class="a" style="left:6px;top:436px;width:160px;height:16px;background-color:#fff;background-image:repeating-conic-gradient(#d4d0c8 0 25%,#fff 0 50%);background-size:2px 2px"></div>
<div class="a sbtn" style="left:6px;top:436px;width:16px;height:16px"><div class="a" style="left:5px;top:4px;border-top:4px solid transparent;border-bottom:4px solid transparent;border-right:4px solid #000"></div></div>
<div class="a sbtn" style="left:41px;top:436px;width:71px;height:16px"></div>
<div class="a sbtn" style="left:150px;top:436px;width:16px;height:16px"><div class="a" style="left:6px;top:4px;border-top:4px solid transparent;border-bottom:4px solid transparent;border-left:4px solid #000"></div></div>
<div class="a" style="left:166px;top:436px;width:16px;height:16px;background:#d4d0c8"></div>
<div class="a" style="left:188px;top:70px;width:477px;height:383px;background:#fff;box-shadow:inset 1px 1px #808080,inset 2px 2px #404040,inset 0 -1px #fff,inset 0 -2px #d4d0c8"></div>
<div class="a" style="left:190px;top:72px;width:167px;height:16px;background:#d4d0c8;box-shadow:inset -1px -1px #808080,inset 1px 0 #fff"></div>
<div class="t" style="left:195px;top:73px;line-height:16px;letter-spacing:-0.5px">Name</div>
<div class="a" style="left:357px;top:72px;width:96px;height:16px;background:#d4d0c8;box-shadow:inset -1px -1px #808080,inset 1px 0 #fff"></div>
<div class="t" style="left:362px;top:73px;line-height:16px;letter-spacing:0px">Type</div>
<div class="a" style="left:453px;top:72px;width:209px;height:16px;background:#d4d0c8;box-shadow:inset -1px -1px #808080,inset 1px 0 #fff"></div>
<div class="t" style="left:458px;top:73px;line-height:16px;letter-spacing:0px">Data</div>
<div class="a" style="left:662px;top:72px;width:3px;height:16px;background:#d4d0c8;box-shadow:inset 0 -1px #808080,inset 1px 0 #fff"></div>
<svg class="a" style="left:192px;top:89px" width="16" height="16" shape-rendering="crispEdges"><use href="#i3"/></svg>
<div class="t" style="left:209px;top:90px;line-height:17px;letter-spacing:0.3px">(Default)</div>
<div class="t" style="left:362px;top:90px;line-height:17px;letter-spacing:-1.0px">REG_SZ</div>
<div class="t" style="left:458px;top:90px;line-height:17px;letter-spacing:0.17px">(value not set)</div>
<svg class="a" style="left:192px;top:106px" width="16" height="16" shape-rendering="crispEdges"><use href="#i4"/></svg>
<div class="a" style="left:192px;top:106px;width:16px;height:16px;background-image:repeating-conic-gradient(#0a246a 0 25%,transparent 0 50%);background-size:2px 2px"></div>
<div class="a" style="left:208px;top:106px;width:149px;height:17px;background:#0a246a;outline:1px dotted #f0f080;outline-offset:-1px"></div>
<div class="t" style="left:209px;top:107px;line-height:17px;color:#fff;letter-spacing:-0.2px">{01E04581-4EEE-11D0-BFE...</div>
<div class="t" style="left:362px;top:107px;line-height:17px;letter-spacing:-0.75px">REG_BINARY</div>
<div class="t" style="left:458px;top:107px;line-height:17px;letter-spacing:0px"> 81 45 e0 01 ee 4e d0 11 bf e9 00 aa ...</div>
<svg class="a" style="left:192px;top:123px" width="16" height="16" shape-rendering="crispEdges"><use href="#i4"/></svg>
<div class="t" style="left:209px;top:124px;line-height:17px;letter-spacing:-0.1px">{0E5CBF21-D15E-11D0-83...</div>
<div class="t" style="left:362px;top:124px;line-height:17px;letter-spacing:-0.75px">REG_BINARY</div>
<div class="t" style="left:458px;top:124px;line-height:17px;letter-spacing:0px"> 21 bf 5c e 5f d1 d0 11 83 01 00 aa 00...</div>
<svg class="a" style="left:192px;top:140px" width="16" height="16" shape-rendering="crispEdges"><use href="#i4"/></svg>
<div class="t" style="left:209px;top:141px;line-height:17px;letter-spacing:0px">ITBarLayout</div>
<div class="t" style="left:362px;top:141px;line-height:17px;letter-spacing:-0.75px">REG_BINARY</div>
<div class="t" style="left:458px;top:141px;line-height:17px;letter-spacing:-0.05px"> 00 00 00 00 00 00 00 00 00 00 00 00 ...</div>
<div class="a" style="left:4px;top:458px;width:644px;height:18px;box-shadow:inset 1px 1px #808080,inset -1px -1px #fff"></div>
<svg class="a" style="left:652px;top:463px" width="14" height="13" shape-rendering="crispEdges"><path d="M12 0L0 12M12 4L4 12M12 8L8 12" stroke="#808080" stroke-width="1.4"/><path d="M13 1L1 13M13 5L5 13M13 9L9 13" stroke="#fff" stroke-width="1"/></svg>
<div class="a" style="left:250px;top:134px;width:358px;height:325px;background:#d4d0c8;box-shadow:inset 1px 1px #d4d0c8,inset -1px -1px #404040,inset 2px 2px #fff,inset -2px -2px #808080">
<div class="a" style="left:3px;top:3px;width:352px;height:18px;background:linear-gradient(to right,#808080,#c0c0c0)"></div>
<svg class="a" style="left:5px;top:4px" width="16" height="16" shape-rendering="crispEdges"><use href="#i0"/></svg>
<div class="t" style="left:22px;top:4px;color:#d4d0c8;font-weight:bold;letter-spacing:.2px">Edit Binary Value</div>
<div class="a raised" style="left:337px;top:5px;width:16px;height:14px"><svg class="a" style="left:4px;top:3px" width="8" height="7" shape-rendering="crispEdges"><path d="M0 0h2v1h1v1h2v-1h1v-1h2v1h-1v1h-1v1h-1v1h1v1h1v1h1v1h-2v-1h-1v-1h-2v1h-1v1h-2v-1h1v-1h1v-1h1v-1h-1v-1h-1v-1h-1z" fill="#000"/></svg></div>
<div class="t" style="left:11px;top:29px">Value name :</div>
<div class="a sunken" style="left:11px;top:46px;width:337px;height:20px;background:#fff"></div>
<div class="t" style="left:14px;top:48px;letter-spacing:-.18px">{01E04581-4EEE-11D0-BFE9-00AA005B4383}</div>
<div class="t" style="left:11px;top:77px">Value data :</div>
<div class="a sunken" style="left:11px;top:94px;width:332px;height:193px;background:#fff"></div>
<div class="t" style="left:15px;top:98px;font-family:'Liberation Mono', monospace;font-size:13.33px;line-height:16px"><span style="color:#0000ff">0000</span> 81 45 E0 01 EE 4E D0 11  .Eà.îNÐ.</div>
<div class="t" style="left:15px;top:114px;font-family:'Liberation Mono', monospace;font-size:13.33px;line-height:16px"><span style="color:#0000ff">0008</span> BF E9 00 AA 00 5B 43 83  ¿é.ª.[C.</div>
<div class="t" style="left:15px;top:130px;font-family:'Liberation Mono', monospace;font-size:13.33px;line-height:16px"><span style="color:#0000ff">0010</span> 10 00 00 00 00 00 00 00  ........</div>
<div class="a" style="left:126px;top:144px;width:40px;height:16px;background:#000"></div>
<div class="a" style="left:279px;top:144px;width:16px;height:16px;background:#000"></div>
<div class="t" style="left:15px;top:146px;font-family:'Liberation Mono', monospace;font-size:13.33px;line-height:16px"><span style="color:#0000ff">0018</span> 01 E0 32 <span style="color:#fff">F4 01</span> 00 00 00  .à2<span style="color:#fff">ô.</span>...</div>
<div class="a" style="left:325px;top:96px;width:16px;height:190px;background:#fcfcfc;box-shadow:inset 1px 0 #a0a0a0,inset -1px 0 #a0a0a0"></div>
<div class="a sbtn" style="left:325px;top:96px;width:16px;height:16px"><div class="a" style="left:4px;top:6px;border-left:4px solid transparent;border-right:4px solid transparent;border-bottom:4px solid #000"></div></div>
<div class="a sbtn" style="left:325px;top:112px;width:16px;height:30px"></div>
<div class="a sbtn" style="left:325px;top:269px;width:16px;height:16px"><div class="a" style="left:4px;top:6px;border-left:4px solid transparent;border-right:4px solid transparent;border-top:4px solid #000"></div></div>
<div class="a raised" style="left:171px;top:294px;width:81px;height:22px"></div>
<div class="t" style="left:171px;top:297px;width:81px;text-align:center">OK</div>
<div class="a raised" style="left:261px;top:294px;width:81px;height:22px"></div>
<div class="t" style="left:261px;top:297px;width:81px;text-align:center">Cancel</div>
</div>
</body></html>
